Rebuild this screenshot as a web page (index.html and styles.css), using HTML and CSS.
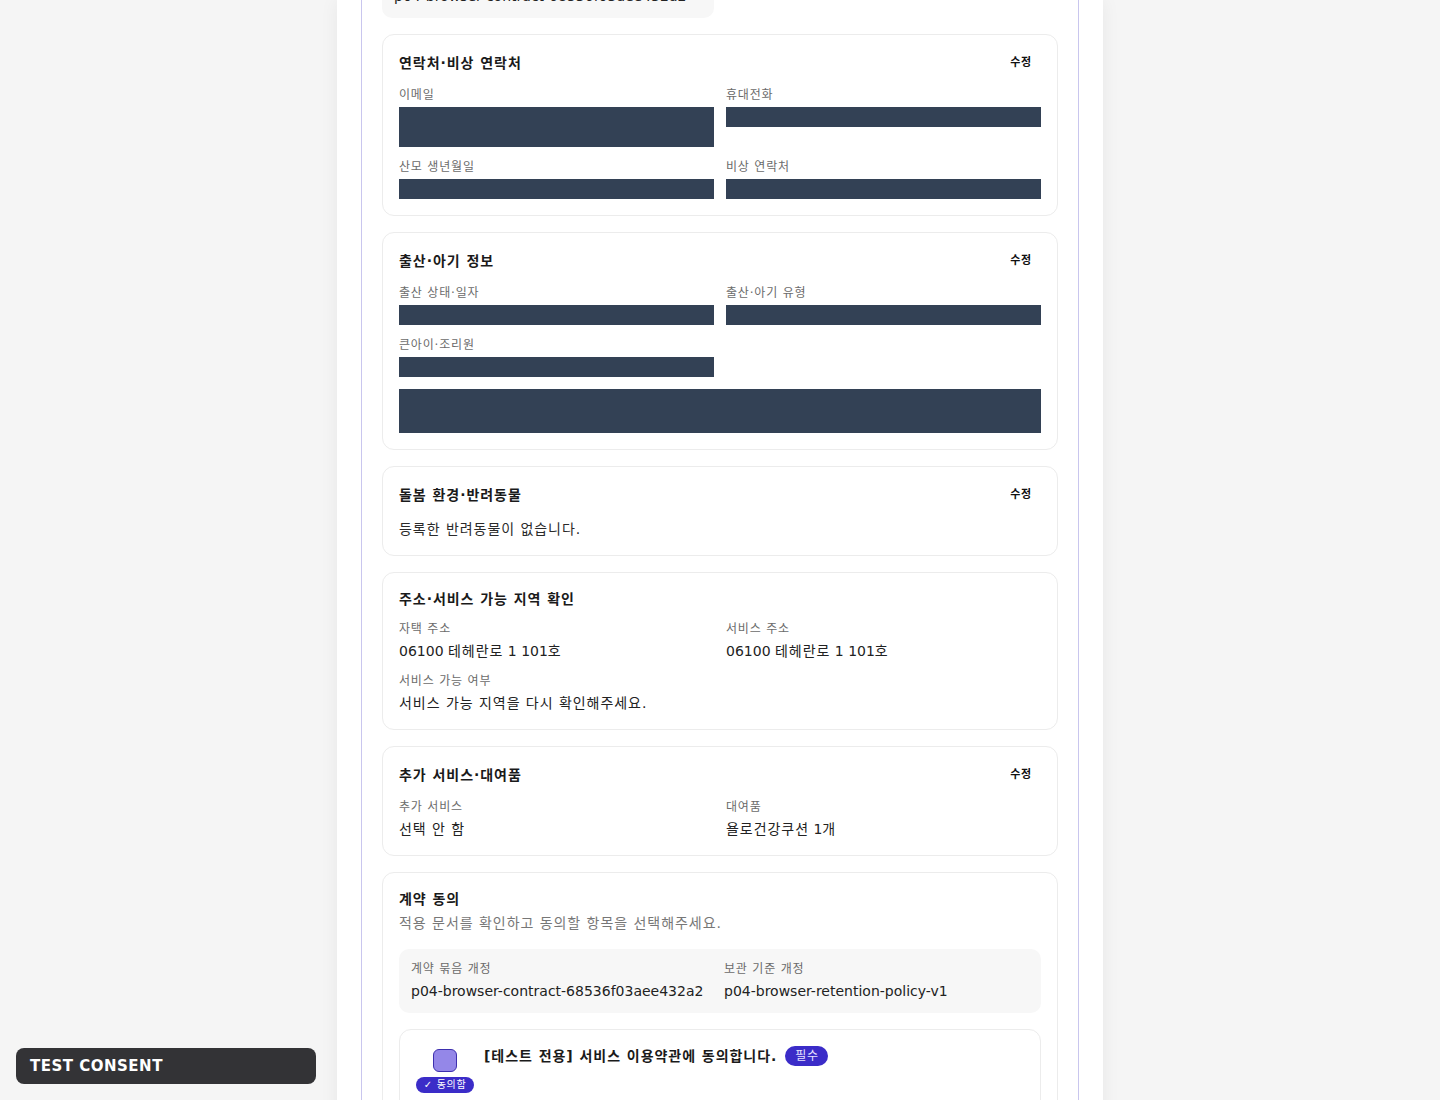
FILE: index.html
```html
<!DOCTYPE html>
<html lang="ko">
<head>
<meta charset="utf-8">
<title>계약 확인</title>
<link rel="stylesheet" href="styles.css">
</head>
<body>
<div class="page">
  <main class="column">
    <div class="frame">
      <div class="prev-box">
        <div class="doc-value">p04-browser-contract-68536f03aee432a2</div>
      </div>

      <section class="card">
        <div class="card-head">
          <h2 class="card-title ko">연락처·비상 연락처</h2>
          <button class="edit-btn ko" type="button">수정</button>
        </div>
        <div class="grid">
          <div class="field">
            <div class="label ko">이메일</div>
            <div class="redact h40"></div>
          </div>
          <div class="field">
            <div class="label ko">휴대전화</div>
            <div class="redact h20"></div>
          </div>
          <div class="field">
            <div class="label ko">산모 생년월일</div>
            <div class="redact h20"></div>
          </div>
          <div class="field">
            <div class="label ko">비상 연락처</div>
            <div class="redact h20"></div>
          </div>
        </div>
      </section>

      <section class="card">
        <div class="card-head">
          <h2 class="card-title ko">출산·아기 정보</h2>
          <button class="edit-btn ko" type="button">수정</button>
        </div>
        <div class="grid">
          <div class="field">
            <div class="label ko">출산 상태·일자</div>
            <div class="redact h20"></div>
          </div>
          <div class="field">
            <div class="label ko">출산·아기 유형</div>
            <div class="redact h20"></div>
          </div>
          <div class="field">
            <div class="label ko">큰아이·조리원</div>
            <div class="redact h20"></div>
          </div>
          <div class="redact h44 span2"></div>
        </div>
      </section>

      <section class="card">
        <div class="card-head">
          <h2 class="card-title ko">돌봄 환경·반려동물</h2>
          <button class="edit-btn ko" type="button">수정</button>
        </div>
        <p class="plain ko">등록한 반려동물이 없습니다.</p>
      </section>

      <section class="card">
        <div class="card-head short">
          <h2 class="card-title ko">주소·서비스 가능 지역 확인</h2>
        </div>
        <div class="grid">
          <div class="field">
            <div class="label ko">자택 주소</div>
            <div class="value ko"><span class="lat">06100 </span>테헤란로<span class="lat"> 1 101</span>호</div>
          </div>
          <div class="field">
            <div class="label ko">서비스 주소</div>
            <div class="value ko"><span class="lat">06100 </span>테헤란로<span class="lat"> 1 101</span>호</div>
          </div>
          <div class="field">
            <div class="label ko">서비스 가능 여부</div>
            <div class="value ko">서비스 가능 지역을 다시 확인해주세요.</div>
          </div>
        </div>
      </section>

      <section class="card">
        <div class="card-head">
          <h2 class="card-title ko">추가 서비스·대여품</h2>
          <button class="edit-btn ko" type="button">수정</button>
        </div>
        <div class="grid">
          <div class="field">
            <div class="label ko">추가 서비스</div>
            <div class="value ko">선택 안 함</div>
          </div>
          <div class="field">
            <div class="label ko">대여품</div>
            <div class="value ko">욜로건강쿠션<span class="lat"> 1</span>개</div>
          </div>
        </div>
      </section>

      <section class="card">
        <h2 class="card-title ko">계약 동의</h2>
        <p class="subtitle ko">적용 문서를 확인하고 동의할 항목을 선택해주세요.</p>
        <div class="doc-box">
          <div class="field">
            <div class="label ko">계약 묶음 개정</div>
            <div class="doc-value">p04-browser-contract-68536f03aee432a2</div>
          </div>
          <div class="field">
            <div class="label ko">보관 기준 개정</div>
            <div class="doc-value">p04-browser-retention-policy-v1</div>
          </div>
        </div>
        <div class="consent">
          <div class="consent-check">
            <span class="checkbox"></span>
            <span class="agreed ko">✓ 동의함</span>
          </div>
          <div class="consent-body">
            <div class="consent-title">
              <span class="ko">[테스트 전용] 서비스 이용약관에 동의합니다.</span>
              <span class="req ko">필수</span>
            </div>
            <div class="consent-spacer"></div>
          </div>
        </div>
      </section>
    </div>
  </main>
</div>
<div class="test-tag">TEST CONSENT</div>
</body>
</html>
```

FILE: styles.css
```css
* { box-sizing: border-box; }
html, body { margin: 0; padding: 0; }
body {
  background: #f5f5f5;
  font-family: "DejaVu Sans", "Noto Sans CJK KR", sans-serif;
  color: #1f1f1f;
  height: 1100px;
  overflow: hidden;
}
.ko { letter-spacing: 0.068em; }
.lat { letter-spacing: 0; }
.page {
  display: flex;
  justify-content: center;
}
.column {
  width: 766px;
  background: #ffffff;
  padding: 0 24px 40px;
  box-shadow: 0 0 18px rgba(0, 0, 0, 0.06);
  min-height: 1100px;
}
.frame {
  margin-top: -47px;
  border: 1px solid #c9c6ee;
  padding: 20px;
  display: flex;
  flex-direction: column;
  gap: 16px;
}
.prev-box {
  width: 332px;
  background: #f7f7f7;
  border-radius: 10px;
  padding: 12px;
}
.card {
  border: 1px solid #ececec;
  border-radius: 12px;
  padding: 16px;
  background: #fff;
}
.card-head {
  display: flex;
  align-items: center;
  justify-content: space-between;
  height: 24px;
  margin-bottom: 12px;
}
.card-head.short { height: 20px; }
.card-title {
  margin: 0;
  font-size: 14px;
  line-height: 20px;
  font-weight: 700;
  color: #1a1a1a;
}
.edit-btn {
  border: 0;
  background: transparent;
  font-family: inherit;
  font-size: 11px;
  font-weight: 700;
  line-height: 16px;
  padding: 4px 9px 4px 10px;
  color: #111;
  cursor: pointer;
}
.grid {
  display: grid;
  grid-template-columns: 1fr 1fr;
  column-gap: 12px;
  row-gap: 12px;
}
.span2 { grid-column: 1 / span 2; }
.field {
  display: flex;
  flex-direction: column;
  gap: 4px;
  min-width: 0;
}
.label {
  font-size: 12px;
  line-height: 16px;
  color: #6b6b6b;
}
.value {
  font-size: 14px;
  line-height: 20px;
  color: #222;
}
.redact { background: #334155; }
.h20 { height: 20px; }
.h40 { height: 40px; }
.h44 { height: 44px; }
.plain {
  margin: 0;
  font-size: 14px;
  line-height: 20px;
  color: #2a2a2a;
}
.subtitle {
  margin: 4px 0 16px;
  font-size: 14px;
  line-height: 20px;
  color: #777;
}
.doc-box {
  background: #f7f7f7;
  border-radius: 10px;
  padding: 12px;
  display: grid;
  grid-template-columns: 1fr 1fr;
  column-gap: 8px;
}
.doc-value {
  font-size: 14px;
  line-height: 20px;
  color: #222;
  white-space: nowrap;
}
.consent {
  margin-top: 16px;
  border: 1px solid #ececec;
  border-radius: 12px;
  padding: 16px;
  display: flex;
  gap: 10px;
}
.consent-check {
  width: 58px;
  display: flex;
  flex-direction: column;
  align-items: center;
  gap: 5px;
  padding-top: 3px;
}
.checkbox {
  width: 24px;
  height: 23px;
  border-radius: 6px;
  background: #9487e8;
  border: 1px solid #3d2fae;
}
.agreed {
  display: inline-block;
  background: #3b2cc8;
  color: #fff;
  font-size: 10px;
  line-height: 16px;
  padding: 0 8px;
  border-radius: 8px;
  white-space: nowrap;
}
.consent-body { flex: 1; }
.consent-title {
  display: flex;
  align-items: center;
  gap: 8px;
  font-size: 14px;
  line-height: 20px;
  font-weight: 700;
  color: #1a1a1a;
}
.req {
  background: #3b2cc8;
  color: #e5e2ff;
  font-size: 12px;
  font-weight: 400;
  line-height: 20px;
  padding: 0 9px 0 10px;
  border-radius: 10px;
}
.consent-spacer { height: 60px; }
.test-tag {
  position: fixed;
  left: 16px;
  bottom: 16px;
  width: 300px;
  height: 36px;
  background: #333336;
  color: #fff;
  border-radius: 8px;
  padding: 0 14px;
  display: flex;
  align-items: center;
  font-size: 15px;
  font-weight: 700;
  letter-spacing: 0.5px;
}
```
